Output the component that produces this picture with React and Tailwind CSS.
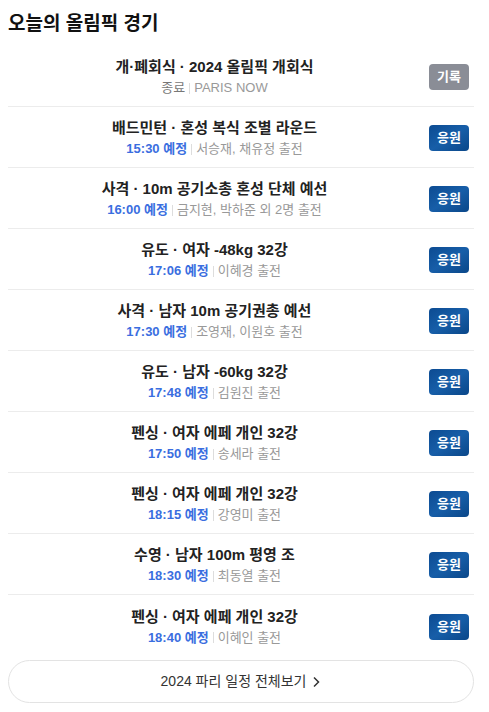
import React from 'react';

const games = [
    { title: '배드민턴 · 혼성 복식 조별 라운드', time: '15:30 예정', who: '서승재, 채유정 출전' },
    { title: '사격 · 10m 공기소총 혼성 단체 예선', time: '16:00 예정', who: '금지현, 박하준 외 2명 출전' },
    { title: '유도 · 여자 -48kg 32강', time: '17:06 예정', who: '이혜경 출전' },
    { title: '사격 · 남자 10m 공기권총 예선', time: '17:30 예정', who: '조영재, 이원호 출전' },
    { title: '유도 · 남자 -60kg 32강', time: '17:48 예정', who: '김원진 출전' },
    { title: '펜싱 · 여자 에페 개인 32강', time: '17:50 예정', who: '송세라 출전' },
    { title: '펜싱 · 여자 에페 개인 32강', time: '18:15 예정', who: '강영미 출전' },
    { title: '수영 · 남자 100m 평영 조', time: '18:30 예정', who: '최동열 출전' },
    { title: '펜싱 · 여자 에페 개인 32강', time: '18:40 예정', who: '이혜인 출전' },
];

function Row({ title, sub, button, last }) {
    return (
        <div className={`h-[61px] pt-[2px] flex items-center ${last ? '' : 'border-b border-[#ececec]'}`}>
            <div className="flex-1 flex flex-col items-center gap-[2px]">
                <div className="h-[20px] text-[15px] leading-[20px] font-semibold text-[#222]">{title}</div>
                <div className="h-[18px] text-[13px] leading-[18px] flex items-center">{sub}</div>
            </div>
            <div className="w-[40px] ml-[8px] mr-[5px] shrink-0">{button}</div>
        </div>
    );
}

const Pipe = () => <span className="mx-[4px] w-px h-[11px] bg-[#ddd] inline-block" />;

export default function App() {
    return (
        <div className="bg-white min-h-[712px] pl-[8px] pr-[15px] font-['Liberation_Sans','Noto_Sans_CJK_KR',sans-serif]">
            <div className="h-[46px] pt-[10px]">
                <h1 className="h-[28px] text-[19px] leading-[28px] font-bold text-[#111]">오늘의 올림픽 경기</h1>
            </div>

            <Row
                title="개·폐회식 · 2024 올림픽 개회식"
                sub={<><span className="text-[#777]">종료</span><Pipe /><span className="text-[#999]">PARIS NOW</span></>}
                button={
                    <div className="h-[26px] rounded-[4px] bg-[#8a8d96] text-white text-[13px] font-bold flex items-center justify-center">기록</div>
                }
            />
            {games.map((g, i) => (
                <Row
                    key={i}
                    last={i === games.length - 1}
                    title={g.title}
                    sub={<><span className="text-[#3a6ee0] font-bold">{g.time}</span><Pipe /><span className="text-[#999]">{g.who}</span></>}
                    button={
                        <div className="h-[26px] rounded-[4px] bg-gradient-to-br from-[#0c4b92] via-[#175ea8] to-[#0a4789] text-white text-[13px] font-bold flex items-center justify-center">응원</div>
                    }
                />
            ))}

            <button className="mt-[4px] w-full h-[43px] rounded-full border border-[#e3e3e3] flex items-center justify-center text-[14px] text-[#333]">
                2024 파리 일정 전체보기
                <svg width="10" height="12" viewBox="0 0 10 12" className="ml-[5px]">
                    <path d="M3 1.5 L7.5 6 L3 10.5" fill="none" stroke="#333" strokeWidth="1.5" />
                </svg>
            </button>
        </div>
    );
}
